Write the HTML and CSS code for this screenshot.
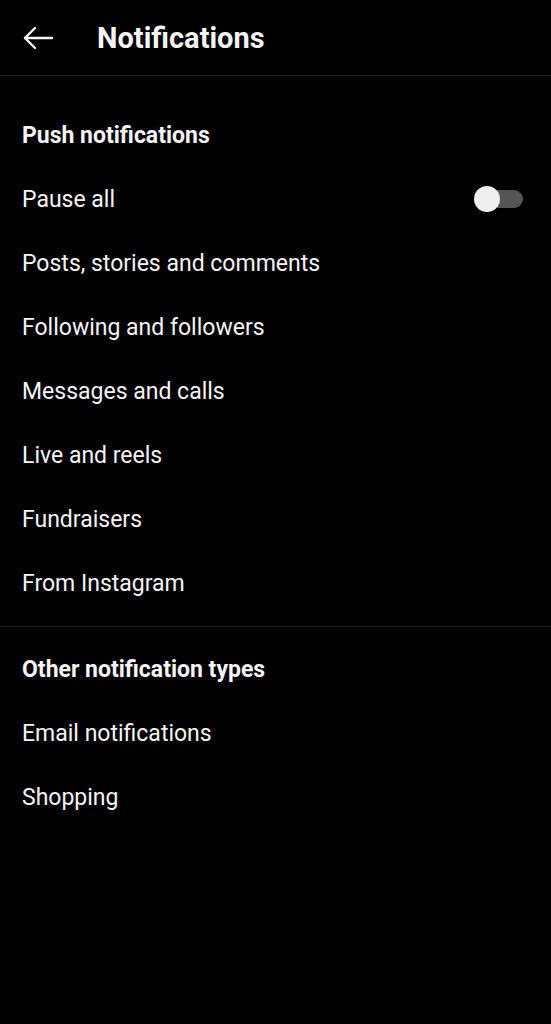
FILE: index.html
```html
<!DOCTYPE html>
<html lang="en">
<head>
  <meta charset="UTF-8">
  <title>Notifications</title>
  <link rel="stylesheet" href="styles.css">
</head>
<body>

  <header class="top-bar">
    <button class="back-btn" aria-label="Back">
      <svg width="32" height="24" viewBox="0 0 32 24" fill="none" stroke="#f5f5f5" stroke-width="2.4" stroke-linecap="round" stroke-linejoin="round">
        <path d="M30 12H3"/>
        <path d="M13 2L3 12l10 10"/>
      </svg>
    </button>
    <h1 class="title">Notifications</h1>
  </header>

  <section class="group">
    <h2 class="group-title">Push notifications</h2>
    <div class="row">
      <span>Pause all</span>
      <span class="switch"><span class="knob"></span></span>
    </div>
    <div class="row">Posts, stories and comments</div>
    <div class="row">Following and followers</div>
    <div class="row">Messages and calls</div>
    <div class="row">Live and reels</div>
    <div class="row">Fundraisers</div>
    <div class="row">From Instagram</div>
  </section>

  <section class="group last">
    <h2 class="group-title">Other notification types</h2>
    <div class="row">Email notifications</div>
    <div class="row">Shopping</div>
  </section>

</body>
</html>
```

FILE: styles.css
```css
html, body {
  margin: 0;
  background: #000;
}

body {
  color: #f5f5f5;
  font-family: Roboto, "Liberation Sans", sans-serif;
  height: 1024px;
}

.top-bar {
  display: flex;
  align-items: center;
  height: 75px;
  border-bottom: 1px solid #1c1c1c;
  padding: 0 22px;
}

.back-btn {
  background: none;
  border: none;
  padding: 0;
  width: 32px;
  height: 24px;
  margin-right: 43px;
  display: flex;
}

.title {
  margin: 0;
  font-size: 29px;
  font-weight: 700;
}

.group {
  padding: 27px 0 11px;
  border-bottom: 1px solid #1c1c1c;
}

.group.last {
  padding-top: 10px;
  border-bottom: none;
}

.group-title,
.row {
  height: 64px;
  display: flex;
  align-items: center;
  justify-content: space-between;
  padding: 0 28px 0 22px;
  margin: 0;
  font-size: 23px;
}

.group-title {
  font-weight: 700;
}

.row {
  font-weight: 400;
}

.switch {
  position: relative;
  width: 48px;
  height: 18px;
  border-radius: 9px;
  background: #555;
}

.knob {
  position: absolute;
  left: -1px;
  top: -4px;
  width: 26px;
  height: 26px;
  border-radius: 50%;
  background: #efefef;
}
```
